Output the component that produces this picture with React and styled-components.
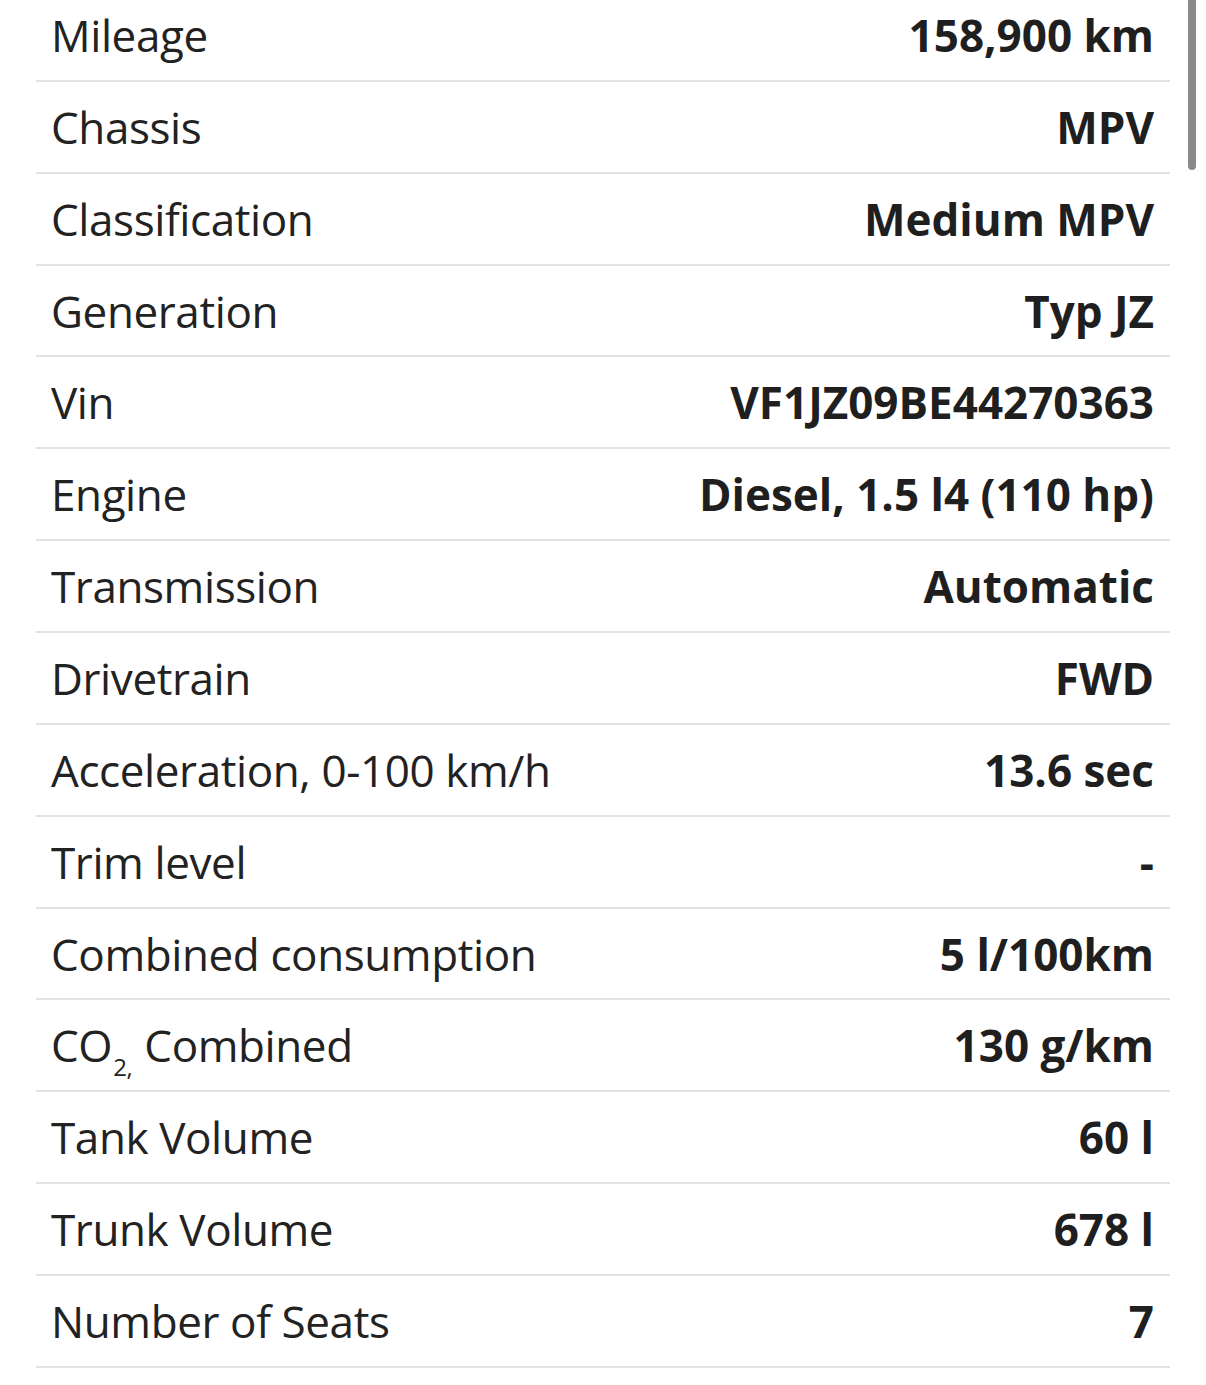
import React from "react";
import styled, { createGlobalStyle } from "styled-components";

const GlobalStyle = createGlobalStyle`
  html, body {
    margin: 0;
    padding: 0;
    background: #ffffff;
    overflow: hidden;
  }
  body {
    font-family: "Open Sans", "Noto Sans", sans-serif;
    color: #202124;
  }
`;

const Page = styled.div`
  position: relative;
  width: 1206px;
  height: 1385px;
  overflow: hidden;
`;

const List = styled.div`
  margin-top: -10px;
  padding: 0 36px;
  width: 1134px;
`;

const Row = styled.div`
  display: flex;
  align-items: center;
  justify-content: space-between;
  height: 89.86px;
  padding: 0 16px 0 15px;
  border-bottom: 2px solid #e2e2e2;
`;

const Label = styled.span`
  font-size: 44px;
  font-weight: 400;
  letter-spacing: -0.4px;
  color: #222;
`;

const Value = styled.span`
  font-size: 44px;
  font-weight: 700;
  letter-spacing: 0;
  color: #1f1f1f;
`;

const Sub = styled.span`
  font-size: 24px;
  position: relative;
  top: 14px;
  margin: 0 1px;
`;

const Scrollbar = styled.div`
  position: absolute;
  top: 0;
  right: 10px;
  width: 8px;
  height: 170px;
  background: #8a8a8a;
  border-radius: 0 0 4px 4px;
`;

const specs = [
  ["Mileage", "158,900 km"],
  ["Chassis", "MPV"],
  ["Classification", "Medium MPV"],
  ["Generation", "Typ JZ"],
  ["Vin", "VF1JZ09BE44270363"],
  ["Engine", "Diesel, 1.5 l4 (110 hp)"],
  ["Transmission", "Automatic"],
  ["Drivetrain", "FWD"],
  ["Acceleration, 0-100 km/h", "13.6 sec"],
  ["Trim level", "-"],
  ["Combined consumption", "5 l/100km"],
  [
    <>
      CO<Sub>2,</Sub> Combined
    </>,
    "130 g/km",
  ],
  ["Tank Volume", "60 l"],
  ["Trunk Volume", "678 l"],
  ["Number of Seats", "7"],
];

export default function App() {
  return (
    <Page>
      <GlobalStyle />
      <List>
        {specs.map(([label, value], i) => (
          <Row key={i}>
            <Label>{label}</Label>
            <Value>{value}</Value>
          </Row>
        ))}
      </List>
      <Scrollbar />
    </Page>
  );
}
